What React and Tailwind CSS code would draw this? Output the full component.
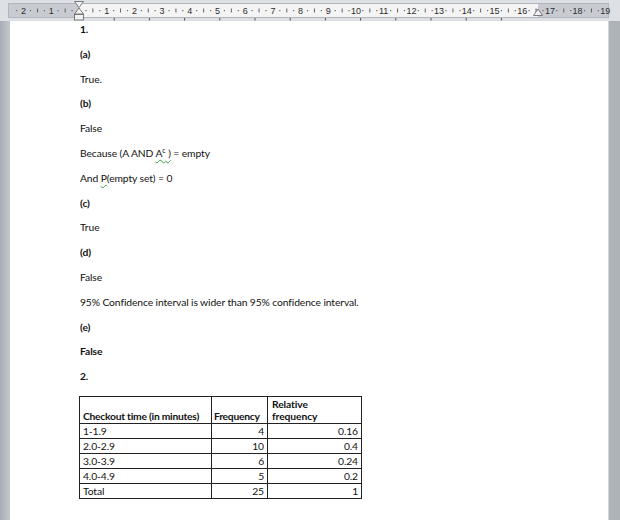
import React from "react";

const CM = 27.7;
const ORIGIN = 79;

function Ruler() {
  const nums = [];
  for (let n = -2; n <= 19; n++) {
    if (n === 0) continue;
    nums.push(n);
  }
  const marks = [];
  for (let q = -10; q <= 78; q++) {
    if (q % 4 === 0) continue;
    const x = ORIGIN + (q * CM) / 4;
    if (x < 10 || x > 606) continue;
    marks.push({ x, half: q % 2 !== 0 ? false : true });
  }
  const tabs = [];
  for (let k = 1; k <= 12; k++) tabs.push(ORIGIN + 35.2 * k);
  return (
    <svg width="620" height="21" viewBox="0 0 620 21" className="block">
      <rect x="0" y="0" width="620" height="21" fill="#dde0e4" />
      <rect x="8.5" y="3.5" width="600" height="14" fill="#c8ccd2" stroke="#b3b7bd" />
      <rect x="79" y="4" width="459" height="13" fill="#f4f4f4" />
      {marks.map((m, i) =>
        m.half ? (
          <line key={i} x1={m.x} x2={m.x} y1="8.5" y2="12.5" stroke="#555" strokeWidth="0.9" />
        ) : (
          <rect key={i} x={m.x - 0.6} y="10" width="1.2" height="1.2" fill="#666" />
        )
      )}
      {nums.map((n) => (
        <text
          key={n}
          x={ORIGIN + n * CM}
          y="13.8"
          textAnchor="middle"
          fontSize="9"
          fill="#2d2d2d"
          fontFamily="'Liberation Sans', Arial, sans-serif"
        >
          {Math.abs(n)}
        </text>
      ))}
      {tabs.map((x, i) => (
        <line key={i} x1={x} x2={x} y1="18" y2="20.5" stroke="#555" strokeWidth="1" />
      ))}
      <path d="M74.5 1.5 L83.5 1.5 L79 7.5 Z" fill="#f2f2f2" stroke="#6d6d6d" strokeWidth="0.9" />
      <path d="M79 8 L83.5 14 L74.5 14 Z" fill="#f2f2f2" stroke="#6d6d6d" strokeWidth="0.9" />
      <rect x="74.5" y="14.5" width="9" height="5.5" fill="#f2f2f2" stroke="#6d6d6d" strokeWidth="0.9" />
      <path d="M538 9 L542.5 15.5 L533.5 15.5 Z" fill="#f2f2f2" stroke="#6d6d6d" strokeWidth="0.9" />
    </svg>
  );
}

function P({ children, bold }) {
  return (
    <div className={`h-[24.8px] leading-[14px] whitespace-nowrap ${bold ? "font-bold" : ""}`}>
      {children}
    </div>
  );
}

const rows = [
  ["1-1.9", "4", "0.16"],
  ["2.0-2.9", "10", "0.4"],
  ["3.0-3.9", "6", "0.24"],
  ["4.0-4.9", "5", "0.2"],
  ["Total", "25", "1"],
];

export default function App() {
  return (
    <div className="w-[620px] h-[520px] overflow-hidden flex flex-col bg-[#dde0e4]">
      <Ruler />
      <div className="flex flex-1">
        <div className="w-[10px] bg-gradient-to-r from-[#a9aeb5] to-[#c3c7cd]" />
        <div
          className="flex-1 bg-white pl-[70px] pt-[1px] text-[10.3px] tracking-[-0.1px] text-[#111]"
          style={{ fontFamily: "Lato, 'Open Sans', sans-serif" }}
        >
          <P bold>1.</P>
          <P bold>(a)</P>
          <P>True.</P>
          <P bold>(b)</P>
          <P>False</P>
          <P>
            Because (A AND{" "}
            <span className="underline decoration-wavy decoration-[#3a9a3a] decoration-1 underline-offset-2">
              A<sup className="text-[7px]">c</sup> )
            </span>{" "}
            = empty
          </P>
          <P>
            And{" "}
            <span className="underline decoration-wavy decoration-[#3a9a3a] decoration-1 underline-offset-2">P</span>
            (empty set) = 0
          </P>
          <P bold>(c)</P>
          <P>True</P>
          <P bold>(d)</P>
          <P>False</P>
          <P>95% Confidence interval is wider than 95% confidence interval.</P>
          <P bold>(e)</P>
          <P bold>False</P>
          <P bold>2.</P>
          <table className="-ml-[1px] mt-[2.5px] border-collapse text-[10.3px] leading-[12px] whitespace-nowrap">
            <tbody>
              <tr className="h-[27px]">
                <td className="w-[132px] border border-[#222] px-[3px] pb-[1px] align-bottom font-bold tracking-[-0.25px]">
                  Checkout time (in minutes)
                </td>
                <td className="w-[56px] border border-[#222] px-[2px] pb-[1px] align-bottom font-bold tracking-[-0.25px]">
                  Frequency
                </td>
                <td className="w-[94px] border border-[#222] px-[4px] pb-[1px] align-bottom font-bold">
                  Relative
                  <br />
                  frequency
                </td>
              </tr>
              {rows.map((r) => (
                <tr key={r[0]} className="h-[15px]">
                  <td className="border border-[#222] px-[3px] py-0">{r[0]}</td>
                  <td className="border border-[#222] px-[3px] py-0 text-right">{r[1]}</td>
                  <td className="border border-[#222] px-[3px] py-0 text-right">{r[2]}</td>
                </tr>
              ))}
            </tbody>
          </table>
        </div>
        <div className="w-[12px] bg-[#aeb3ba] border-l border-[#d3d6db]" />
      </div>
    </div>
  );
}
